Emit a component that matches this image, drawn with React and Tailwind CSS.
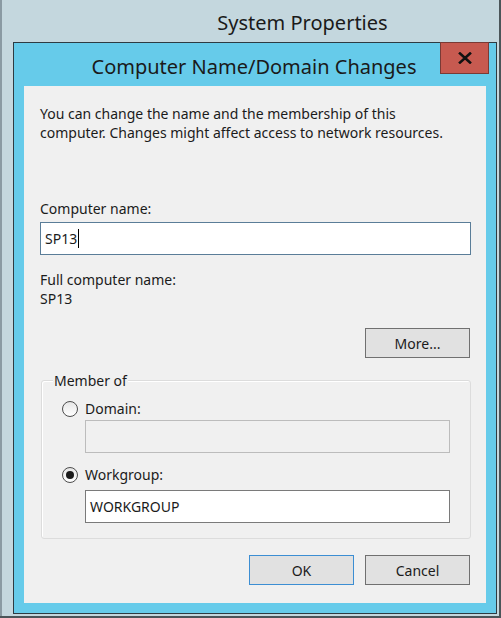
import React from "react";

const FONT = { fontFamily: '"Noto Sans", "Open Sans", "Liberation Sans", sans-serif' };

function Radio({ checked, label }) {
  return (
    <div className="flex h-[19px] items-center">
      <div className="ml-[20px] flex h-[16px] w-[16px] items-center justify-center rounded-full border border-[#4d4d4d] bg-gradient-to-b from-[#e6e6e6] to-white">
        {checked && <div className="h-[8px] w-[8px] rounded-full bg-[#1a1a1a]" />}
      </div>
      <span className="ml-[7px]">{label}</span>
    </div>
  );
}

function Button({ children, primary }) {
  return (
    <div
      className={
        "flex h-[30px] w-[105px] items-center justify-center border bg-[#e1e1e1] " +
        (primary ? "border-[#3c8ed3]" : "border-[#707070]")
      }
    >
      {children}
    </div>
  );
}

export default function App() {
  return (
    <div
      className="flex h-[618px] w-[501px] flex-col bg-[#c4d7de] text-[#1b1b1b]"
      style={FONT}
    >
      <div className="flex min-w-0 flex-1 border-b-[2px] border-[#4b5559]">
        <div className="w-[2px] bg-[#8a9aa3]" />
        <div className="flex min-w-0 flex-1 flex-col border-r-[2px] border-[#4b5559]">
          {/* outer window title */}
          <div className="flex h-[42px] items-center justify-center pl-[104px] pt-[3px] text-[20px] leading-none text-[#1a1a1a]">
            System Properties
          </div>

          {/* dialog */}
          <div className="relative ml-[11px] mr-[2px] mb-[2px] flex min-w-0 flex-1 flex-col border border-[#2e3b42] bg-[#66cbea]">
            <div className="flex h-[43px] items-center justify-center pt-[4px] pr-[2px] text-[20px] leading-none text-[#1a1a1a]">
              Computer Name/Domain Changes
            </div>
            <div className="absolute right-[7px] top-[-1px] flex h-[32px] w-[49px] items-center justify-center border border-[#7a3a35] bg-[#c75a50]">
              <svg width="14" height="12" viewBox="0 0 14 12">
                <path d="M2 1.5 L12 10.5 M12 1.5 L2 10.5" stroke="#111" strokeWidth="2.6" strokeLinecap="square" />
              </svg>
            </div>

            {/* content */}
            <div className="mx-[10px] mb-[10px] flex min-w-0 flex-1 flex-col bg-[#f0f0f0] pl-[16px] pr-[15px] pt-[18px] text-[14px] leading-[19px]">
              <p>
                You can change the name and the membership of this
                <br />
                computer. Changes might affect access to network resources.
              </p>

              <div className="mt-[57px]">Computer name:</div>
              <div className="mt-[4px] flex h-[33px] items-center border border-[#5a7d98] bg-white pl-[4px]">
                <span>SP13</span>
                <span className="ml-[1px] h-[19px] w-[1px] bg-black" />
              </div>

              <div className="mt-[15px]">Full computer name:</div>
              <div>SP13</div>

              <div className="mt-[20px] flex justify-end pr-[1px]">
                <Button>More...</Button>
              </div>

              {/* group box */}
              <div className="relative ml-[1px] mt-[22px] h-[159px] rounded-[3px] border border-[#dcdcdc] shadow-[inset_1px_1px_0_#fff]">
                <div className="absolute left-[11px] top-[-10px] bg-[#f0f0f0] px-[1px]">Member of</div>
                <div className="flex flex-col pr-[20px] pt-[18px]">
                  <Radio label="Domain:" />
                  <div className="ml-[43px] mt-[2px] h-[33px] border border-[#bcbcbc] bg-[#f0f0f0]" />
                  <div className="mt-[12px]">
                    <Radio checked label="Workgroup:" />
                  </div>
                  <div className="ml-[43px] mt-[6px] flex h-[33px] items-center border border-[#7a7a7a] bg-white pl-[4px]">
                    WORKGROUP
                  </div>
                </div>
              </div>

              <div className="mt-[16px] flex justify-end gap-[11px] pr-[1px]">
                <Button primary>OK</Button>
                <Button>Cancel</Button>
              </div>
            </div>
          </div>
        </div>
      </div>
    </div>
  );
}
